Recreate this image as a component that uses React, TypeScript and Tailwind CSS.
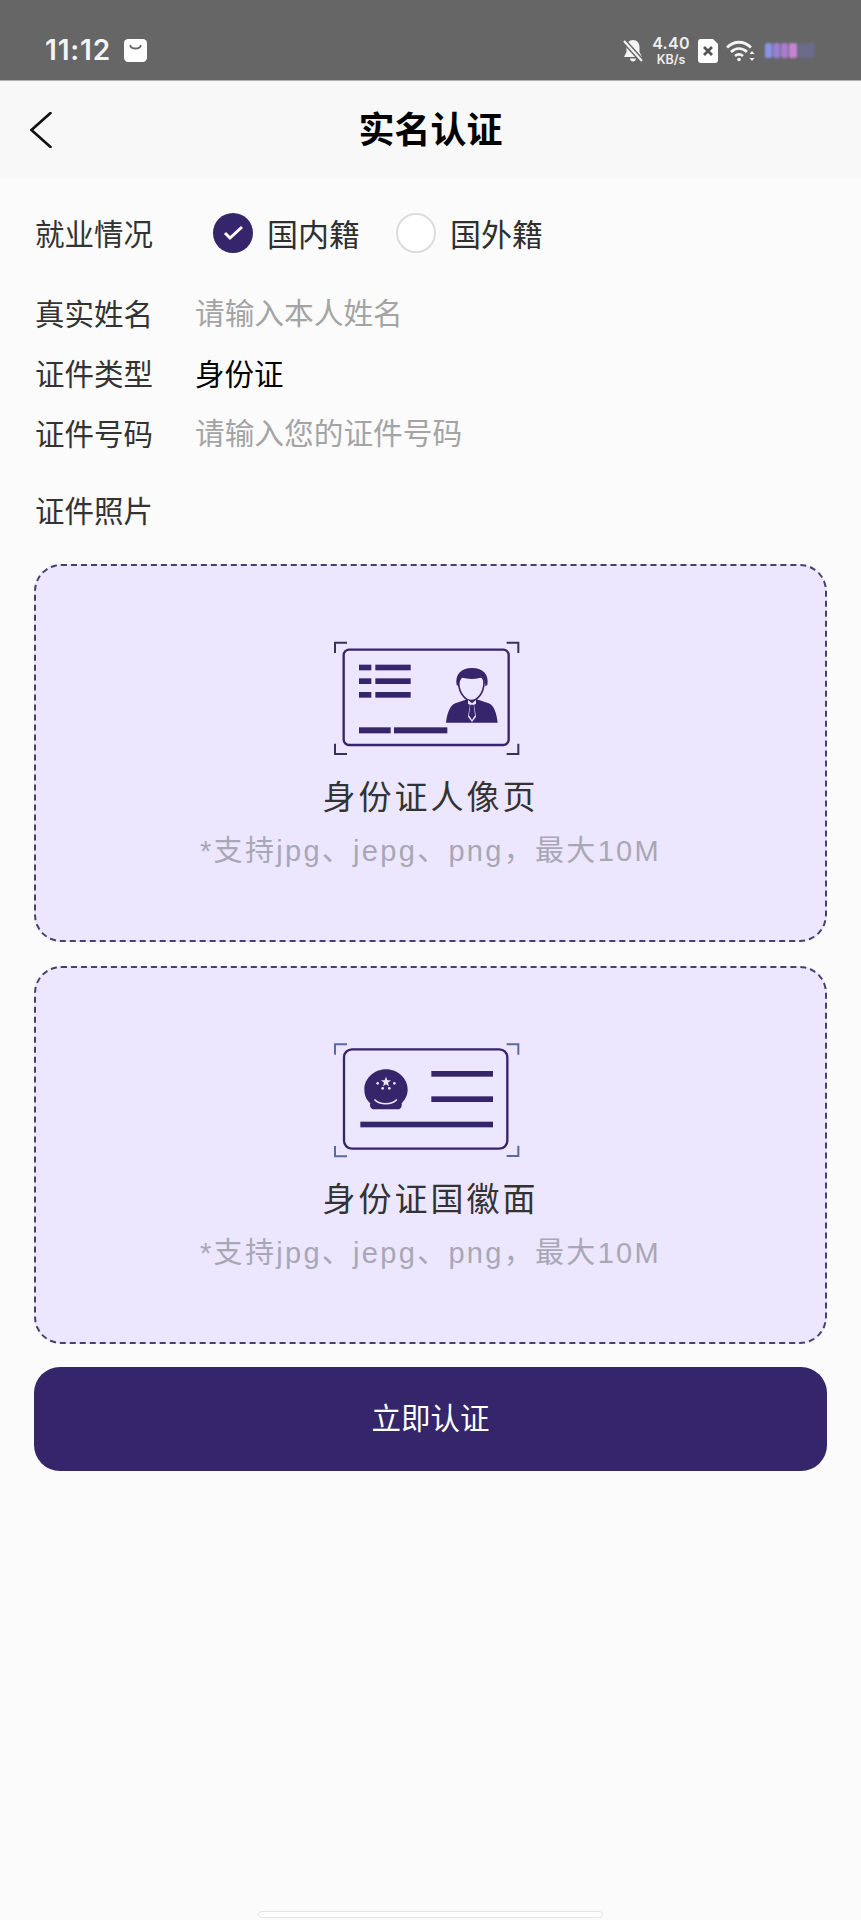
const cjk = "font-['Noto_Sans_CJK_SC','Noto_Sans',sans-serif]"

function StatusBar() {
  return (
    <div className="flex h-[81px] items-start justify-between bg-[#666666] border-b border-[#b5b5b5] pl-[45px] pr-[46px] pt-[34px] text-white">
      <div className="flex items-center gap-[12px]">
        <span className="font-['Inter',sans-serif] text-[28px] leading-[32px] font-semibold tracking-[0.8px] text-[#f4f4f4]">11:12</span>
        <svg className="ml-[1px]" width="23" height="23" viewBox="0 0 22 22">
          <rect width="22" height="22" rx="4" fill="#fff" />
          <path d="M6 6.500c1 3.500 9 3.500 10 0" fill="none" stroke="#666" strokeWidth="1.800" strokeLinecap="round" />
        </svg>
      </div>
      <div className="flex items-center gap-[8px] pt-[2px]">
        <svg width="22" height="24" viewBox="0 0 22 24">
          <path d="M11 1c-4 0-6.500 3-6.500 7v5L2 18h18l-2.500-5V8C17.500 4 15 1 11 1zM8 19.500h6c0 4-6 4-6 0z" fill="#f4f4f4" />
          <path d="M2 2l18 20" stroke="#666" strokeWidth="5" />
          <path d="M2 2l18 20" stroke="#f4f4f4" strokeWidth="2.200" />
        </svg>
        <div className="flex w-[38px] flex-col items-center font-['Inter',sans-serif] font-semibold text-[#efefef]">
          <span className="text-[16px] leading-[15px] tracking-[0.3px]">4.40</span>
          <span className="mt-[3px] text-[12.500px] leading-[11px]">KB/s</span>
        </div>
        <svg width="20" height="24" viewBox="0 0 20 24">
          <path d="M3 0h12l5 5v16a3 3 0 0 1-3 3H3a3 3 0 0 1-3-3V3a3 3 0 0 1 3-3z" fill="#fff" />
          <path d="M6 8l8 8M14 8l-8 8" stroke="#555" strokeWidth="2.800" />
        </svg>
        <svg width="29" height="22" viewBox="0 0 29 22" fill="none" stroke="#f4f4f4" strokeWidth="2.800">
          <path d="M1 7.500c7-7 17-7 24 0" />
          <path d="M5 12c5-4.500 11-4.500 16 0" />
          <path d="M9 16c2.500-2 5.500-2 8 0" />
          <circle cx="13" cy="19.500" r="1.800" fill="#f4f4f4" stroke="none" />
          <path d="M26 11l-2.500 3h5zM26 21l-2.500-3h5z" fill="#f4f4f4" stroke="none" />
        </svg>
        <div className="ml-[2px] flex h-[15px] w-[50px] gap-[1px] blur-[1.200px]">
          <div className="h-full w-[7px] rounded-[2px] bg-[#8b93e6]" />
          <div className="h-full w-[7px] rounded-[2px] bg-[#9a7fd6]" />
          <div className="h-full w-[7px] rounded-[2px] bg-[#a87cd0]" />
          <div className="h-full w-[8px] rounded-[2px] bg-[#c585d2]" />
          <div className="h-full w-[17px] rounded-[2px] bg-[#6b6b8c]" />
        </div>
      </div>
    </div>
  )
}

function NavBar() {
  return (
    <div className="relative flex h-[98px] items-center justify-center bg-[#f8f8f8]">
      <button className="absolute left-[30px] top-[31px]">
        <svg className="block" width="22" height="36" viewBox="0 0 22 36" fill="none" stroke="#111" strokeWidth="2.600" strokeLinecap="round">
          <path d="M20.500 1L1.500 18l19 17" />
        </svg>
      </button>
      <h1 className="pb-[6px] text-[36px] leading-[44px] font-bold text-black">实名认证</h1>
    </div>
  )
}

function Radio({ checked, label }: { checked?: boolean; label: string }) {
  return (
    <div className="flex items-center gap-[14px]">
      {checked ? (
        <div className="flex h-[40px] w-[40px] items-center justify-center rounded-full bg-[#35256a]">
          <svg width="22" height="18" viewBox="0 0 22 18" fill="none" stroke="#fff" strokeWidth="3">
            <path d="M3 9l5 5L20 3" />
          </svg>
        </div>
      ) : (
        <div className="h-[40px] w-[40px] rounded-full border-2 border-[#dcdcdc] bg-white" />
      )}
      <span className="text-[31px] leading-[40px] text-[#2f2f2f]">{label}</span>
    </div>
  )
}

function Field({ label, value, placeholder }: { label: string; value?: string; placeholder?: string }) {
  return (
    <div className="flex h-[60px] items-center pb-[2px]">
      <span className="w-[161px] pl-[1px] text-[29.500px] leading-[40px] text-[#333333]">{label}</span>
      {value ? (
        <span className="text-[29.500px] leading-[40px] text-black">{value}</span>
      ) : (
        <span className="text-[29.700px] leading-[40px] text-[#a4a4a4]">{placeholder}</span>
      )}
    </div>
  )
}

function PortraitIcon() {
  return (
    <svg className="shrink-0" width="240" height="150" viewBox="0 0 720 450">
      <g fill="none" stroke="#35315f" strokeWidth="6">
        <path d="M75 99V68h36M590 68h35v31M75 371v31h36M590 402h35v-31" />
        <rect x="101" y="89" width="495" height="286" rx="16" stroke="#35256a" strokeWidth="7" />
      </g>
      <g fill="#35256a">
        <rect x="147" y="134" width="37" height="17" />
        <rect x="196" y="134" width="106" height="17" />
        <rect x="147" y="175" width="37" height="17" />
        <rect x="196" y="175" width="106" height="17" />
        <rect x="147" y="216" width="37" height="17" />
        <rect x="196" y="216" width="106" height="17" />
        <rect x="147" y="322" width="95" height="18" />
        <rect x="252" y="322" width="160" height="18" />
        <path d="M440 195c-6-30 12-51 46-51s52 21 46 51l-6 4c0-14-4-24-10-28-14 5-38 5-58 0-6 6-11 14-11 28z" />
        <path d="M436 250l36-12 14 4 14-4 36 12c16 6 24 30 27 58H408c3-28 12-52 28-58z" />
      </g>
      <path d="M446 192c-2-9 3-18 8-22 20 5 44 5 60 0 6 5 9 13 8 22-2 28-20 50-38 50s-36-22-38-50z" fill="none" stroke="#35256a" strokeWidth="5" />
      <path d="M474 240l12 10 12-10v12l-6 2 6 36-12 16-12-16 6-36-6-2z" fill="#ece7ff" />
      <path d="M481 254h10l4 32-9 14-9-14z" fill="#35256a" />
    </svg>
  )
}

function EmblemIcon() {
  return (
    <svg className="shrink-0" width="240" height="150" viewBox="0 0 720 450">
      <g fill="none" stroke="#5a6a9e" strokeWidth="6">
        <path d="M75 74V43h36M590 43h35v31M75 348v31h36M590 378h35v-31" />
      </g>
      <rect x="102" y="58" width="490" height="298" rx="24" fill="none" stroke="#35256a" strokeWidth="7" />
      <g fill="#35256a">
        <rect x="364" y="123" width="185" height="17" />
        <rect x="364" y="199" width="185" height="17" />
        <rect x="151" y="275" width="398" height="17" />
        <path d="M228 118c36 0 65 28 65 60 0 20-10 34-18 42 2 8-2 16-8 18H190c-8-2-12-10-9-18-10-8-18-22-18-42 0-32 29-60 65-60z" />
      </g>
      <path d="M228 140l4 11h11l-9 7 3 11-9-6-9 6 3-11-9-7h11z" fill="#ece7ff" />
      <g fill="#ece7ff">
        <circle cx="203" cy="160" r="4" />
        <circle cx="253" cy="160" r="4" />
        <circle cx="218" cy="175" r="4" />
        <circle cx="238" cy="175" r="4" />
      </g>
      <path d="M195 210c14 15 50 15 64 0" fill="none" stroke="#ece7ff" strokeWidth="5" strokeLinecap="round" />
    </svg>
  )
}

function UploadCard({ title, icon, iconClass }: { title: string; icon: React.ReactNode; iconClass: string }) {
  return (
    <div className="flex h-[378px] flex-col items-center rounded-[27px] border-2 border-dashed border-[#45406f] bg-[#ece7ff]">
      <div className={`mr-[2px] h-[207px] ${iconClass}`}>{icon}</div>
      <div className="text-[33px] leading-[44px] tracking-[3px] text-[#333333]">{title}</div>
      <div className="mt-[16px] font-['Liberation_Sans','Noto_Sans_CJK_SC',sans-serif] text-[29px] leading-[36px] tracking-[2.300px] text-[#a9a7b5]">*支持jpg、jepg、png，最大10M</div>
    </div>
  )
}

export default function App() {
  return (
    <div className={`flex min-h-[1920px] flex-col bg-[#fbfbfb] ${cjk}`}>
      <StatusBar />
      <NavBar />
      <div className="px-[34px]">
        <div className="mt-[32px] flex h-[44px] items-center">
          <span className="w-[179px] pb-[2px] pl-[1px] text-[29.500px] leading-[40px] text-[#333333]">就业情况</span>
          <div className="flex items-center gap-[36px]">
            <Radio checked label="国内籍" />
            <Radio label="国外籍" />
          </div>
        </div>
        <div className="mt-[28px]">
          <Field label="真实姓名" placeholder="请输入本人姓名" />
          <Field label="证件类型" value="身份证" />
          <Field label="证件号码" placeholder="请输入您的证件号码" />
        </div>
        <div className="mt-[26px] h-[40px] pl-[1px] text-[29.500px] leading-[40px] text-[#333333]">证件照片</div>
        <div className="mt-[35px] flex flex-col gap-[24px]">
          <UploadCard title="身份证人像页" icon={<PortraitIcon />} iconClass="pt-[54px]" />
          <UploadCard title="身份证国徽面" icon={<EmblemIcon />} iconClass="pt-[62px]" />
        </div>
        <button className="mt-[23px] flex h-[104px] w-full items-center justify-center rounded-[26px] bg-[#35256a] pb-[6px] text-[29.500px] leading-[40px] text-white">
          立即认证
        </button>
      </div>
      <div className="mt-auto mb-[2px] ml-[258px] h-[7px] w-[345px] rounded-full border border-[#e4e4e4] bg-[#fdfdfd]" />
    </div>
  )
}
